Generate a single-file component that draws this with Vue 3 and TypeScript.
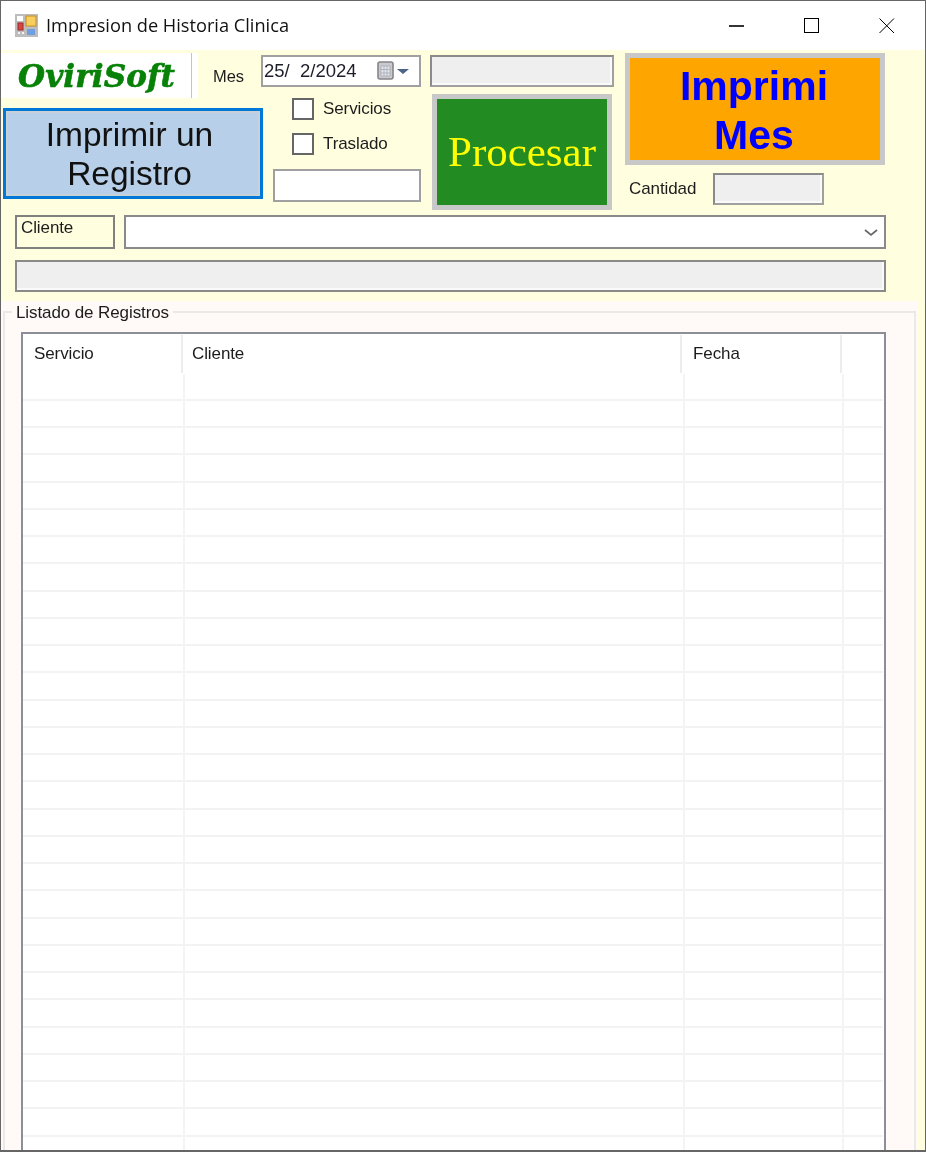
<script setup lang="ts">
const rows: number[] = Array.from({ length: 30 }, (_, i) => i)
const dateText: string = '25/  2/2024'
</script>

<template>
  <div class="win">
    <header class="titlebar">
      <svg class="appicon" width="24" height="24" viewBox="0 0 24 24">
        <rect x="0" y="0" width="23" height="23" fill="#bdbdbd" />
        <rect x="2" y="2" width="6" height="5" fill="#ffffff" />
        <rect x="11" y="2" width="10" height="10" fill="#f8cf5c" stroke="#c98c1c" />
        <rect x="3" y="9" width="5" height="7" fill="#d9453f" stroke="#9c2a28" />
        <rect x="12" y="15" width="8" height="6" fill="#6f9fe0" />
        <rect x="3" y="18" width="2" height="2" fill="#f4f4f4" />
        <rect x="7" y="18" width="2" height="2" fill="#f4f4f4" />
      </svg>
      <span class="title">Impresion de Historia Clinica</span>
      <div class="controls">
        <svg width="16" height="16" viewBox="0 0 16 16"><path d="M0 8h15" stroke="#000" stroke-width="1.6" /></svg>
        <svg width="16" height="16" viewBox="0 0 16 16"><rect x=".5" y=".5" width="14" height="14" fill="none" stroke="#000" /></svg>
        <svg width="16" height="16" viewBox="0 0 16 16"><path d="M.5.5l14.5 14.5M15 .5L.5 15" stroke="#000" fill="none" /></svg>
      </div>
    </header>

    <main class="form">
      <section class="top">
        <div class="col-a">
          <div class="logo-row">
            <div class="logo"><span>OviriSoft</span></div>
            <span class="lbl mes">Mes</span>
          </div>
          <button class="btn-registro">Imprimir un<br />Registro</button>
        </div>

        <div class="col-b">
          <div class="date field">
            <span class="date-text">{{ dateText }}</span>
            <svg class="cal" width="33" height="20" viewBox="0 0 33 20">
              <rect x="1" y="1" width="15" height="17" rx="2" fill="#c9c9ce" stroke="#85858a" stroke-width="1.6" />
              <path d="M4 5h9v10H4zM4 8.500h9M4 12h9M7 5v10M10 5v10" fill="#e4e7ec" stroke="#a6aab2" stroke-width=".8" />
              <path d="M20 8h12l-6 5z" fill="#4c6488" />
            </svg>
          </div>
          <label class="check first"><i class="box"></i><span class="lbl">Servicios</span></label>
          <label class="check second"><i class="box"></i><span class="lbl">Traslado</span></label>
          <div class="small-input field"></div>
        </div>

        <div class="col-c">
          <div class="readonly field upper"></div>
          <button class="btn-procesar">Procesar</button>
        </div>

        <div class="col-d">
          <button class="btn-mes">Imprimi<br />Mes</button>
          <div class="cantidad">
            <span class="lbl">Cantidad</span>
            <div class="readonly field qty"></div>
          </div>
        </div>
      </section>

      <section class="cliente-row">
        <div class="cliente-label lbl">Cliente</div>
        <div class="combo">
          <svg width="14" height="8" viewBox="0 0 14 8"><path d="M1 1l6 5 6-5" fill="none" stroke="#666" stroke-width="1.700" /></svg>
        </div>
      </section>
      <div class="readonly field wide"></div>

      <section class="group">
        <div class="group-frame">
          <span class="legend lbl">Listado de Registros</span>
          <div class="table">
            <div class="thead">
              <div class="th c1 lbl">Servicio</div>
              <div class="th c2 lbl">Cliente</div>
              <div class="th c3 lbl">Fecha</div>
            </div>
            <div v-for="r in rows" :key="r" class="tr">
              <div class="td d1"></div>
              <div class="td d2"></div>
              <div class="td d3"></div>
              <div class="td d4"></div>
            </div>
          </div>
        </div>
      </section>
    </main>
  </div>
</template>

<style>
html, body { margin: 0; background: #fff; }
</style>

<style scoped>
.win {
  box-sizing: border-box;
  width: 926px;
  height: 1152px;
  border: 1px solid #666;
  border-bottom-width: 2px;
  background: #fff;
  overflow: hidden;
  display: flex;
  flex-direction: column;
  font-family: "Liberation Sans", Arial, sans-serif;
  filter: blur(0.45px);
}
.titlebar {
  height: 49px;
  flex: none;
  display: flex;
  align-items: center;
  padding-left: 14px;
  background: #fff;
}
.appicon { margin-top: 1px; }
.title {
  margin: 0 0 2px 7px;
  font: 18.200px "Open Sans", sans-serif;
  color: #111;
}
.controls {
  margin-left: auto;
  margin-right: 30px;
  display: flex;
  gap: 59px;
}
.form {
  flex: 1;
  min-height: 0;
  background: #ffffe0;
  display: flex;
  flex-direction: column;
}
.lbl {
  font-size: 17px;
  color: #1c1c1c;
  letter-spacing: -0.1px;
}
.top { display: flex; height: 165px; align-items: flex-start; flex: none; }
.col-a { width: 260px; flex: none; padding-top: 3px; }
.logo-row { display: flex; }
.logo {
  width: 197px;
  height: 45px;
  background: #fff;
  box-sizing: border-box;
  border-right: 6px solid #fff;
  position: relative;
  display: flex;
  align-items: center;
  padding-left: 17px;
}
.logo::after {
  content: "";
  position: absolute;
  right: 0;
  top: 0;
  bottom: 0;
  width: 1.500px;
  background: #c4c4c4;
}
.logo span {
  font: italic bold 31px "DejaVu Serif", serif;
  color: #078107;
  letter-spacing: 0.15px;
  -webkit-text-stroke: 0.6px #078107;
}
.mes { margin: 14px 0 0 15px; font-size: 16.500px; }
.btn-registro {
  display: block;
  box-sizing: border-box;
  width: 260px;
  height: 91px;
  margin: 10px 0 0 2px;
  padding: 0 7px 0 0;
  border: 3px solid #0078d7;
  outline: 2px solid #c8d0d8;
  outline-offset: -5px;
  background: #b7cfe8;
  font: 33.500px/39px "Liberation Sans", sans-serif;
  color: #111;
}
.field {
  box-sizing: border-box;
  border: 2px solid #a0a0a0;
  background: #fff;
}
.readonly {
  background: #efefef;
  border-top-color: #8a8a8a;
  border-left-color: #8a8a8a;
  box-shadow: inset -2px -2px 0 #fafafa;
}
.col-b { width: 160px; flex: none; padding-top: 5px; }
.date {
  height: 32px;
  display: flex;
  align-items: center;
  padding-left: 1px;
  position: relative;
}
.date-text { white-space: pre; font-size: 18.500px; color: #1e1e2a; }
.cal { margin-left: auto; margin-right: 9px; }
.check { display: flex; align-items: center; margin-left: 31px; height: 22px; }
.check .lbl { margin-left: 9px; }
.check.first { margin-top: 11px; }
.check.second { margin-top: 13px; }
.box {
  box-sizing: border-box;
  width: 22px;
  height: 22px;
  border: 2px solid #666;
  background: #fff;
  flex: none;
}
.small-input { width: 148px; height: 33px; margin: 14px 0 0 12px; }
.col-c { width: 195px; flex: none; margin-left: 9px; padding-top: 5px; }
.upper { width: 184px; height: 32px; }
.btn-procesar {
  display: block;
  box-sizing: border-box;
  width: 180px;
  height: 116px;
  margin: 7px 0 0 2px;
  padding: 0 0 2px;
  border: 5px solid #c8c8c8;
  background: #228b22;
  font: 43px "Liberation Serif", serif;
  color: #ffff00;
}
.col-d { width: 260px; flex: none; margin-left: 0; padding-top: 3px; }
.btn-mes {
  display: block;
  box-sizing: border-box;
  width: 260px;
  height: 112px;
  padding: 3px 2px 0 0;
  border: 5px solid #c8c8c8;
  background: #ffa500;
  font: bold 41px/49px "Liberation Sans", sans-serif;
  color: #0000ff;
}
.cantidad { display: flex; align-items: center; margin: 8px 0 0 4px; }
.qty { width: 111px; height: 32px; margin-left: 17px; }
.cliente-row {
  display: flex;
  flex: none;
  gap: 9px;
  margin: 0 0 0 14px;
  height: 34px;
  position: relative;
}
.cliente-label {
  box-sizing: border-box;
  width: 100px;
  height: 34px;
  border: 2px solid #808080;
  padding: 1px 0 0 4px;
  line-height: 20px;
}
.combo {
  box-sizing: border-box;
  width: 762px;
  height: 34px;
  border: 2px solid #8a8a8a;
  background: #fff;
  display: flex;
  align-items: center;
  justify-content: flex-end;
  padding: 2px 6px 0 0;
}
.wide { width: 871px; height: 32px; margin: 11px 0 0 14px; flex: none; border-color: #8a8a8a; }
.group {
  flex: 1;
  min-height: 0;
  width: 915px;
  margin-top: 9px;
  background: #fff9f7;
  padding-top: 10px;
  box-sizing: border-box;
  margin-left: 1px;
}
.group-frame {
  box-sizing: border-box;
  height: 900px;
  width: 913px;
  margin-left: 1px;
  border: 2px solid #ebe9e7;
  position: relative;
  padding: 19px 28px 0 16px;
}
.legend {
  position: absolute;
  top: -10px;
  left: 7px;
  background: #fff9f7;
  padding: 0 4px;
  line-height: 20px;
}
.table {
  box-sizing: border-box;
  width: 865px;
  height: 900px;
  border: 2px solid #8c8f98;
  background: #fff;
  overflow: hidden;
}
.thead { display: flex; height: 39.500px; padding-top: 1px; box-sizing: border-box; }
.th {
  box-sizing: border-box;
  height: 38px;
  line-height: 38px;
  border-right: 2px solid #ececec;
}
.c1 { width: 160px; padding-left: 11px; }
.c2 { width: 499px; padding-left: 9px; }
.c3 { width: 160px; padding-left: 11px; }
.tr { display: flex; height: 27.250px; box-sizing: border-box; width: 860px; border-bottom: 2px solid #f3f3f3; }
.td { box-sizing: border-box; border-right: 2px solid #f4f4f4; height: 27.250px; }
.d1 { width: 162px; }
.d2 { width: 500px; }
.d3 { width: 159px; }
.d4 { flex: 1; border-right: none; }
</style>
